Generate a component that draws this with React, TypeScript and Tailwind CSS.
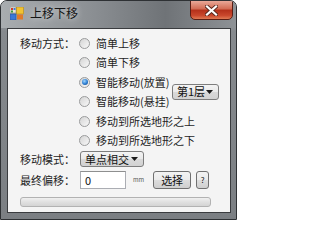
import React from 'react';

const font = { fontFamily: '"Noto Sans CJK SC", "Liberation Sans", sans-serif' };

const Radio = ({ checked = false, label }: { checked?: boolean; label: string }) => (
  <div className="flex items-center h-full">
    <span className="w-[11px] h-[11px] rounded-full border border-[#9a9b9c] bg-[linear-gradient(135deg,#d4d4d4,#f8f8f8)] flex items-center justify-center">
      {checked && (
        <span className="w-[6px] h-[6px] rounded-full bg-[radial-gradient(circle_at_40%_35%,#9fd6ff,#2a7bd0_55%,#10407a)]" />
      )}
    </span>
    <span className="ml-[6px] text-[11px] leading-none text-[#1e1e1e]">{label}</span>
  </div>
);

const Combo = ({ text, className }: { text: string; className: string }) => (
  <div
    className={
      'flex items-center rounded-[3px] border border-[#7d7d7d] bg-[linear-gradient(#f4f4f4,#e9e9e9_50%,#d9d9d9_51%,#d2d2d2)] pl-[4px] pr-[5px] ' +
      className
    }
  >
    <span className="text-[11px] leading-none text-[#111]">{text}</span>
    <svg className="ml-auto" width="7" height="4" viewBox="0 0 7 4">
      <path d="M0 0h7L3.5 4z" fill="#1a1a1a" />
    </svg>
  </div>
);

const App = () => {
  return (
    <div className="w-[237px] h-[220px] bg-white" style={font}>
      <div className="w-[237px] h-[220px] flex flex-col rounded-t-[7px] border border-[#2e3134] bg-[linear-gradient(#b4b8bb,#868a8e_14%,#7b7f83)] overflow-hidden">
        {/* title bar */}
        <div className="h-[27px] flex items-start shrink-0 bg-[linear-gradient(90deg,#a9adb0,#8a8e92_40%,#6f7377_70%,#8e9296)]">
          <svg className="ml-[9px] mt-[6px]" width="14" height="13" viewBox="0 0 14 13">
            <rect x="0" y="0" width="6" height="6" fill="#e8e4d8" stroke="#8a8a8a" strokeWidth="0.6" />
            <rect x="1" y="1" width="2" height="2" fill="#d23a2a" />
            <rect x="3.5" y="1" width="2" height="2" fill="#3c7fd8" />
            <rect x="1" y="3.5" width="2" height="2" fill="#3c9a3c" />
            <rect x="6.5" y="0" width="7" height="7" fill="#f1c232" stroke="#b58a12" strokeWidth="0.6" />
            <rect x="0" y="7" width="6" height="6" fill="#3b78d8" stroke="#244f96" strokeWidth="0.6" />
            <rect x="7" y="7.5" width="6" height="5" fill="#e07a2a" />
          </svg>
          <span className="ml-[6px] mt-[6px] text-[12px] leading-none text-[#151515] [text-shadow:0_0_6px_#e8e8e8]">
            上移下移
          </span>
          <div className="ml-auto mr-[3px] mt-[-1px] w-[43px] h-[20px] rounded-b-[5px] border border-[#5a1e14] bg-[linear-gradient(#e9a898,#d16a52_45%,#b4301a_50%,#c9472c_80%,#e07a54)] flex items-center justify-center">
            <svg width="13" height="11" viewBox="0 0 13 11">
              <path d="M2 1.5l9 8M11 1.5l-9 8" stroke="#5a2a20" strokeWidth="4" strokeLinecap="square" />
              <path d="M2 1.5l9 8M11 1.5l-9 8" stroke="#ffffff" strokeWidth="2.2" strokeLinecap="square" />
            </svg>
          </div>
        </div>

        {/* client area */}
        <div className="flex-1 ml-[6px] mr-[5px] mb-[6px] border border-[#3a3c3f] bg-[#f4f4f4] pt-[5px] flex flex-col">
          <div className="flex pl-[12px]">
            <div className="w-[59px] h-[19px] flex items-center text-[11px] leading-none text-[#1e1e1e]">移动方式：</div>
            <div className="flex flex-col w-[140px]">
              <div className="h-[19px]"><Radio label="简单上移" /></div>
              <div className="h-[19px]"><Radio label="简单下移" /></div>
              <div className="flex items-center">
                <div className="flex flex-col">
                  <div className="h-[20px]"><Radio checked label="智能移动(放置)" /></div>
                  <div className="h-[19px]"><Radio label="智能移动(悬挂)" /></div>
                </div>
                <Combo text="第1层" className="ml-auto h-[16px] w-[47px]" />
              </div>
              <div className="h-[20px]"><Radio label="移动到所选地形之上" /></div>
              <div className="h-[19px]"><Radio label="移动到所选地形之下" /></div>
            </div>
          </div>

          <div className="flex items-center pl-[12px] mt-[1px] h-[16px]">
            <div className="w-[60px] text-[11px] leading-none text-[#1e1e1e]">移动模式：</div>
            <Combo text="单点相交" className="h-[16px] w-[64px]" />
          </div>

          <div className="flex items-center pl-[12px] mt-[4px] h-[18px]">
            <div className="w-[60px] text-[11px] leading-none text-[#1e1e1e]">最终偏移：</div>
            <div className="w-[46px] h-[18px] border border-[#abadb3] border-t-[#8e8f8f] bg-white flex items-center pl-[4px] text-[11px] leading-none text-[#111]">
              0
            </div>
            <span className="ml-[7px] text-[6px] leading-none text-[#555]">mm</span>
            <div className="ml-[9px] w-[38px] h-[18px] rounded-[3px] border border-[#707070] bg-[linear-gradient(#f3f3f3,#ebebeb_50%,#dddddd_51%,#cfcfcf)] flex items-center justify-center text-[11px] leading-none text-[#111]">
              选择
            </div>
            <div className="ml-[5px] w-[13px] h-[18px] rounded-[3px] border border-[#707070] bg-[linear-gradient(#f3f3f3,#ebebeb_50%,#dddddd_51%,#cfcfcf)] flex items-center justify-center text-[8px] leading-none text-[#111]">
              ?
            </div>
          </div>

          <div className="ml-[12px] mt-[8px] w-[191px] h-[10px] rounded-[3px] border border-[#b2b2b2] bg-[linear-gradient(#f0f0f0,#e0e0e0_50%,#d4d4d4)]" />
        </div>
      </div>
    </div>
  );
};

export default App;
